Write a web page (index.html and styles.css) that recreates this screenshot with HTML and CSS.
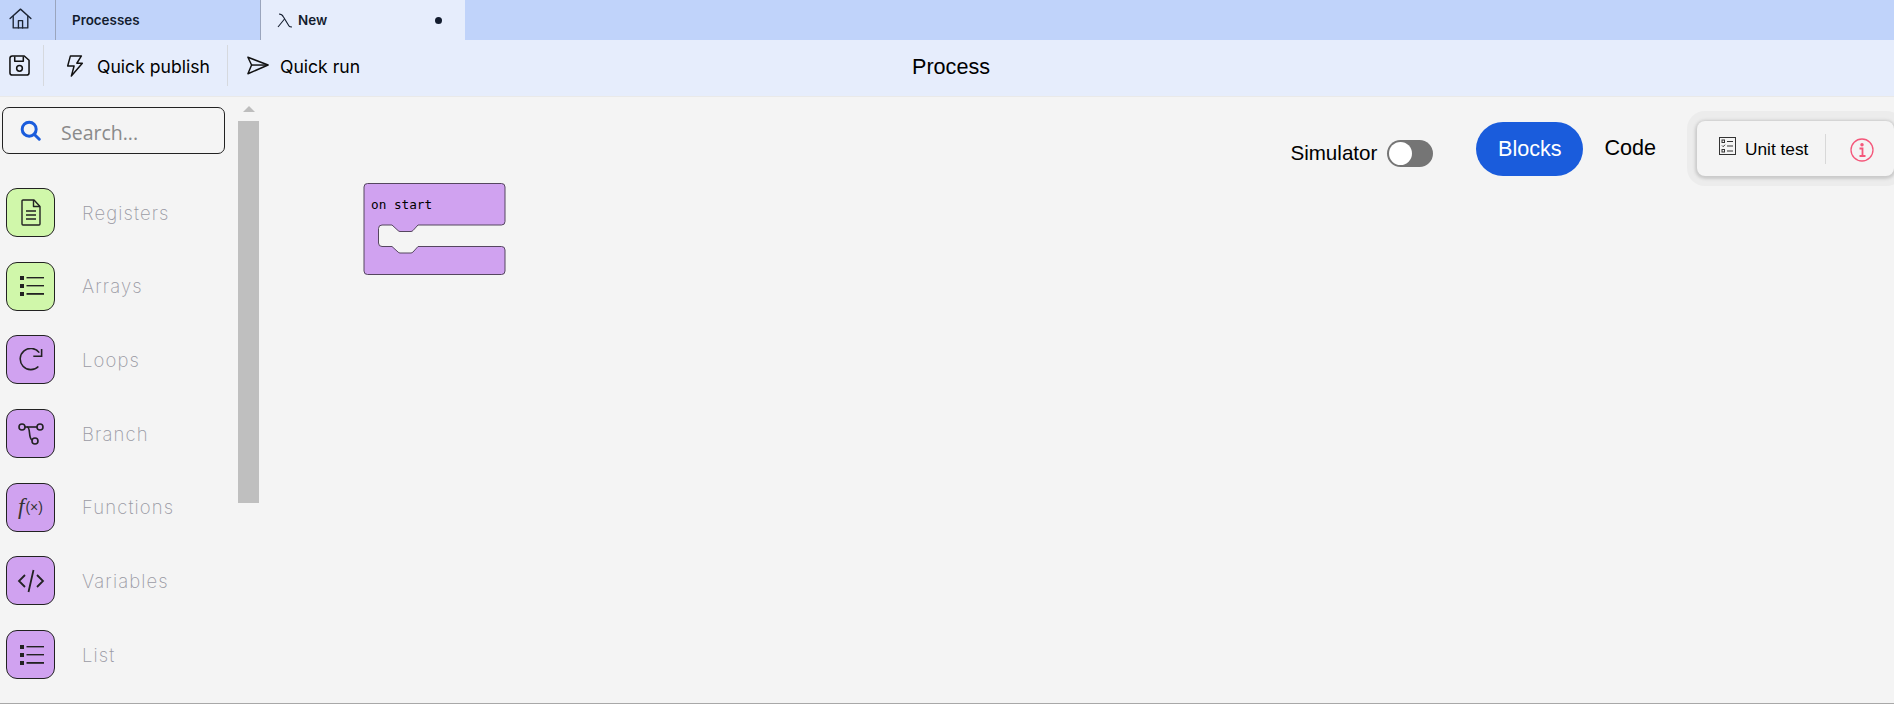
FILE: index.html
```html
<!DOCTYPE html>
<html lang="en">
<head>
    <meta charset="UTF-8">
    <title>Process</title>
    <link rel="stylesheet" href="styles.css">
</head>
<body>
    <div class="tabs">
        <div class="tab-home">
            <svg width="25" height="25" viewBox="0 0 24 24" fill="none" stroke="#1b2433" stroke-width="1.300" stroke-linejoin="round" stroke-linecap="round"><path d="M2 12 12 3l10 9"/><path d="M5 10v11h14V10"/><path d="M10 21v-7h4v7"/></svg>
        </div>
        <div class="tab">Processes</div>
        <div class="tab tab-active">
            <svg class="lambda" width="16" height="15" viewBox="0 0 16 15" fill="none" stroke="#131c2e" stroke-width="1.100"><path d="M2 1c2.500 0 3.500 1 4.500 3L12 13c.5.800 1.500 1 3 1"/><path d="M7.500 6 1 14"/></svg>
            <span class="tab-name">New</span>
            <span class="dot"></span>
        </div>
    </div>

    <div class="toolbar">
        <div class="tool tool-save">
            <svg width="21" height="21" viewBox="1 1 22 22" fill="none" stroke="#111" stroke-width="1.600" stroke-linejoin="round"><path d="M4 2h13l5 4.500v13a2.500 2.500 0 0 1-2.500 2.500h-15A2.500 2.500 0 0 1 2 19.500v-15A2.500 2.500 0 0 1 4.500 2z"/><path d="M7 2.500v5h9v-5"/><circle cx="12" cy="15" r="3"/></svg>
        </div>
        <div class="tool tool-publish">
            <svg width="18" height="22" viewBox="3 1 18 24" fill="none" stroke="#111" stroke-width="1.600" stroke-linejoin="round"><path d="M7 2h12l-5 8h6L8 24l3-11H4z"/></svg>
            <span>Quick publish</span>
        </div>
        <div class="tool tool-run">
            <svg width="22" height="19" viewBox="0 2 24 20" fill="none" stroke="#111" stroke-width="1.600" stroke-linejoin="round"><path d="M1 3 23 11.500 1 21 5 11.500z"/><path d="M5 11.500h18"/></svg>
            <span>Quick run</span>
        </div>
        <div class="toolbar-title">Process</div>
    </div>

    <div class="main">
        <div class="palette">
            <div class="search">
                <svg width="21" height="21" viewBox="0 0 24 24" fill="none" stroke="#1a5cdc" stroke-width="3.400" stroke-linecap="round"><circle cx="10.500" cy="10.500" r="8"/><path d="M16.500 16.500l5.500 5.500"/></svg>
                <span>Search...</span>
            </div>
            <div class="cat">
                <div class="cat-icon green">
                    <svg width="20" height="27" viewBox="0 0 20 27" fill="none" stroke="#222" stroke-width="1.400" stroke-linejoin="round"><path d="M2 1h11l6 6.500V25a1 1 0 0 1-1 1H2a1 1 0 0 1-1-1V2a1 1 0 0 1 1-1z"/><path d="M12.500 1v6.500H19"/><path d="M5 12h10M5 16h10M5 20h10" stroke-width="1.600"/></svg>
                </div>
                <span>Registers</span>
            </div>
            <div class="cat">
                <div class="cat-icon green">
                    <svg width="26" height="22" viewBox="0 0 26 22" fill="#222"><rect x="2" y="1" width="4" height="4"/><rect x="2" y="9" width="4" height="4"/><rect x="2" y="17" width="4" height="4"/><rect x="8.500" y="2" width="17.500" height="1.400"/><rect x="8.500" y="10" width="17.500" height="1.400"/><rect x="8.500" y="18" width="17.500" height="1.800"/></svg>
                </div>
                <span>Arrays</span>
            </div>
            <div class="cat">
                <div class="cat-icon purple">
                    <svg width="24" height="24" viewBox="0 0 26 26" fill="none" stroke="#222" stroke-width="1.700"><path d="M21 20a11.500 11.500 0 1 1 1-15"/><path d="M24.500 1v8h-9"/></svg>
                </div>
                <span>Loops</span>
            </div>
            <div class="cat">
                <div class="cat-icon purple">
                    <svg width="26" height="24" viewBox="0 0 26 24" fill="none" stroke="#222" stroke-width="1.600"><circle cx="4" cy="5" r="3"/><circle cx="22" cy="5" r="3"/><circle cx="17" cy="19" r="3"/><path d="M7 5h12"/><path d="M9 5c4 0 1 11 5 13"/></svg>
                </div>
                <span>Branch</span>
            </div>
            <div class="cat">
                <div class="cat-icon purple fx"><i>f</i><small>(×)</small></div>
                <span>Functions</span>
            </div>
            <div class="cat">
                <div class="cat-icon purple">
                    <svg width="28" height="24" viewBox="0 0 28 24" fill="none" stroke="#222" stroke-width="1.800"><path d="M8 6l-6 6 6 6M20 6l6 6-6 6M16.500 1l-5 22"/></svg>
                </div>
                <span>Variables</span>
            </div>
            <div class="cat">
                <div class="cat-icon purple">
                    <svg width="26" height="22" viewBox="0 0 26 22" fill="#222"><rect x="2" y="1" width="4" height="4"/><rect x="2" y="9" width="4" height="4"/><rect x="2" y="17" width="4" height="4"/><rect x="8.500" y="2" width="17.500" height="1.400"/><rect x="8.500" y="10" width="17.500" height="1.400"/><rect x="8.500" y="18" width="17.500" height="1.800"/></svg>
                </div>
                <span>List</span>
            </div>
        </div>
        <div class="scrollbar">
            <div class="scroll-up"></div>
            <div class="scroll-thumb"></div>
        </div>
        <div class="canvas">
            <svg class="block" width="143" height="94" viewBox="0 0 143 94">
                <path d="M4.500.5h134a3.500 3.500 0 0 1 3.500 3.500v34.500a3.500 3.500 0 0 1-3.500 3.500H55l-5 5.500a3 3 0 0 1-2 1H37a3 3 0 0 1-2-1L29 42H19a3.500 3.500 0 0 0-3.500 3.500V60a3.500 3.500 0 0 0 3.500 3.500h10l6 5.500a3 3 0 0 0 2 1h11a3 3 0 0 0 2-1l5-5.500h83.500a3.500 3.500 0 0 1 3.500 3.500V88a3.500 3.500 0 0 1-3.500 3.500H4.500A3.500 3.500 0 0 1 1 88V4A3.500 3.500 0 0 1 4.500.5z" fill="#d0a2f0" stroke="#55465f"/>
                <text x="8" y="26" class="block-text">on start</text>
            </svg>
            <div class="top-right">
                <span class="sim-label">Simulator</span>
                <div class="switch"><div class="knob"></div></div>
                <div class="pill">Blocks</div>
                <div class="code-tab">Code</div>
                <div class="panel">
                    <svg class="unit-icon" width="17" height="18" viewBox="0 0 17 18" fill="none" stroke="#333" stroke-width="1"><rect x=".5" y=".5" width="16" height="17"/><rect x="3" y="3" width="2.500" height="2.500"/><rect x="3" y="12.500" width="2.500" height="2.500"/><path d="M8 4.500h6M3 8.500l1.200 1.200 1.800-2M8 9h6M8 14h6"/></svg>
                    <span>Unit test</span>
                    <div class="panel-sep"></div>
                    <svg class="info-icon" width="24" height="24" viewBox="0 0 24 24" fill="none" stroke="#f4577a" stroke-width="1.300"><circle cx="12" cy="12" r="11"/><path d="M9.500 10.500H12.500V18M9.500 18h6" stroke-width="1.800"/><circle cx="12" cy="6.800" r="1.100" fill="#f4577a"/></svg>
                </div>
            </div>
        </div>
    </div>
</body>
</html>
```

FILE: styles.css
```css
html, body {
    height: 100%;
}
body {
    margin: 0;
    display: flex;
    flex-direction: column;
    overflow: hidden;
    background-color: #f4f4f4;
    font-family: "Liberation Sans", sans-serif;
    color: #000;
    border-bottom: 1px solid #a8a8a8;
    box-sizing: border-box;
}

/* tabs */
.tabs {
    display: flex;
    height: 40px;
    background-color: #c0d3fa;
    font-family: Inter, sans-serif;
    font-size: 13.400px;
    font-weight: 600;
    color: #131c2e;
}
.tab-home {
    width: 56px;
    padding: 0 0 4px 8px;
    box-sizing: border-box;
    display: flex;
    align-items: center;
    border-right: 1px solid #9aa5bd;
}
.tab {
    width: 205px;
    padding-left: 16px;
    box-sizing: border-box;
    display: flex;
    align-items: center;
    border-right: 1px solid #9aa5bd;
}
.tab-active {
    width: 204px;
    padding: 0 23px 0 16px;
    background-color: #e6edfc;
    border-right: none;
}
.lambda {
    margin-right: 5px;
}
.tab-name {
    flex: 1;
}
.dot {
    width: 7px;
    height: 7px;
    border-radius: 50%;
    background-color: #131c2e;
}

/* toolbar */
.toolbar {
    position: relative;
    display: flex;
    align-items: flex-start;
    height: 57px;
    padding-top: 5px;
    background-color: #e6edfc;
    border-bottom: 1px solid #e9e9e9;
    box-sizing: border-box;
    font-family: Inter, sans-serif;
    font-size: 17.600px;
}
.tool {
    display: flex;
    align-items: center;
    height: 41px;
    border-right: 1px solid #d6d9de;
}
.tool span {
    margin-top: 2px;
}
.tool-save {
    padding: 0 13px 0 9px;
}
.tool-publish {
    gap: 13px;
    padding: 0 17px 0 22px;
}
.tool-run {
    gap: 11px;
    padding-left: 19px;
    border-right: none;
}
.toolbar-title {
    position: absolute;
    left: 8px;
    right: 0;
    top: 6px;
    line-height: 41px;
    text-align: center;
    font-family: "Liberation Sans", sans-serif;
    font-size: 21.600px;
    pointer-events: none;
}

/* main */
.main {
    flex: 1;
    display: flex;
    min-height: 0;
}
.palette {
    width: 238px;
    flex-shrink: 0;
    padding: 10px 0 0 2px;
    box-sizing: border-box;
}
.search {
    width: 223px;
    height: 47px;
    box-sizing: border-box;
    border: 1px solid #222;
    border-radius: 7px;
    display: flex;
    align-items: center;
    gap: 20px;
    padding-left: 17px;
    margin-bottom: 34px;
    font-family: "Open Sans", sans-serif;
    font-size: 19.500px;
    color: #8a8a8a;
}
.search span {
    margin-top: 3px;
}
.cat {
    display: flex;
    align-items: center;
    gap: 27px;
    padding-left: 4px;
    height: 49px;
    margin-bottom: 24.700px;
    font-family: Inter, sans-serif;
    font-size: 18.500px;
    font-weight: 200;
    color: #9a9aa4;
    letter-spacing: 1.100px;
}
.cat-icon {
    width: 49px;
    height: 49px;
    box-sizing: border-box;
    border: 1px solid #222;
    border-radius: 11px;
    display: flex;
    align-items: center;
    justify-content: center;
    flex-shrink: 0;
}
.green {
    background-color: #d0f7aa;
}
.purple {
    background-color: #d0a2f0;
}
.fx {
    color: #333;
    letter-spacing: 0;
    font-weight: 400;
    gap: 1px;
}
.fx i {
    font-family: "Liberation Serif", serif;
    font-size: 23px;
}
.fx small {
    font-family: "Liberation Sans", sans-serif;
    font-size: 14px;
}
.scrollbar {
    width: 21px;
    flex-shrink: 0;
}
.scroll-up {
    width: 0;
    height: 0;
    margin: 9px auto;
    border-left: 6px solid transparent;
    border-right: 6px solid transparent;
    border-bottom: 6px solid #bdbdbd;
}
.scroll-thumb {
    height: 382px;
    background-color: #bfbfbf;
}

/* canvas */
.canvas {
    position: relative;
    flex: 1;
}
.block {
    position: absolute;
    left: 104px;
    top: 86px;
}
.block-text {
    font-family: "DejaVu Sans Mono", monospace;
    font-size: 12.700px;
    fill: #000;
}
.top-right {
    position: absolute;
    right: 0;
    top: 24px;
    display: flex;
    align-items: center;
    font-size: 21.600px;
}
.sim-label {
    margin: 9px 10px 0 0;
    font-size: 20.600px;
}
.switch {
    width: 46px;
    height: 27px;
    border-radius: 14px;
    background-color: #757575;
    padding: 2px;
    box-sizing: border-box;
    margin: 9px 43px 0 0;
}
.knob {
    width: 23px;
    height: 23px;
    border-radius: 50%;
    background-color: #fff;
}
.pill {
    width: 107px;
    height: 54px;
    line-height: 54px;
    text-align: center;
    border-radius: 27px;
    background-color: #1a5cdc;
    color: #fff;
}
.code-tab {
    margin: 0 41px 0 21px;
    padding-bottom: 2px;
}
.panel {
    width: 197px;
    height: 55px;
    box-sizing: border-box;
    background-color: #f4f4f4;
    border-radius: 8px;
    box-shadow: 0 1px 3px 2px #cacaca, 0 0 0 10px #ececec;
    display: flex;
    align-items: center;
    padding-left: 22px;
    font-size: 17.300px;
}
.unit-icon {
    margin-bottom: 6px;
}
.panel span {
    margin: 2px 0 0 9px;
}
.panel-sep {
    width: 1px;
    height: 30px;
    background-color: #d8d8d8;
    margin: 0 24px 0 17px;
}
.info-icon {
    margin-top: 3px;
}
```
